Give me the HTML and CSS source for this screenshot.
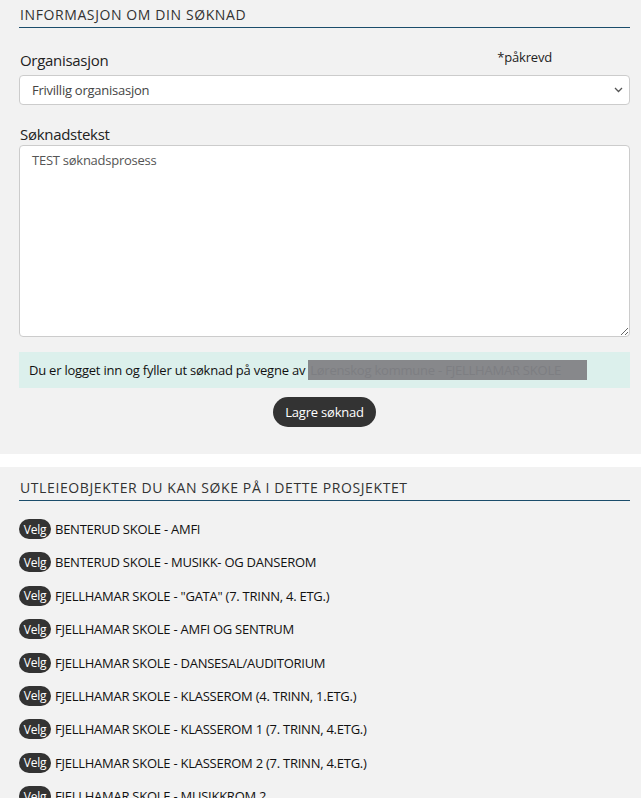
FILE: index.html
```html
<!DOCTYPE html>
<html lang="no">
<head>
<meta charset="utf-8">
<title>Søknad</title>
<link rel="stylesheet" href="styles.css">
</head>
<body>
<section class="panel panel-form">
  <h2 class="section-title">Informasjon om din søknad</h2>
  <div class="label-row">
    <label class="field-label" for="org">Organisasjon</label>
    <span class="required">*påkrevd</span>
  </div>
  <div class="select-wrap">
    <select id="org" class="select">
      <option>Frivillig organisasjon</option>
    </select>
    <svg class="chevron" width="9" height="6" viewBox="0 0 9 6"><path d="M1 1l3.5 3.5L8 1" fill="none" stroke="#555" stroke-width="1.3"/></svg>
  </div>
  <label class="field-label field-label-2" for="txt">Søknadstekst</label>
  <textarea id="txt" class="textarea">TEST søknadsprosess</textarea>
  <div class="info">Du er logget inn og fyller ut søknad på vegne av <span class="redacted">Lørenskog kommune - FJELLHAMAR SKOLE</span></div>
  <div class="actions"><button class="btn">Lagre søknad</button></div>
</section>
<section class="panel panel-list">
  <h2 class="section-title">Utleieobjekter du kan søke på i dette prosjektet</h2>
  <ul class="objects">
    <li><span class="velg">Velg</span>BENTERUD SKOLE - AMFI</li>
    <li><span class="velg">Velg</span>BENTERUD SKOLE - MUSIKK- OG DANSEROM</li>
    <li><span class="velg">Velg</span>FJELLHAMAR SKOLE - "GATA" (7. TRINN, 4. ETG.)</li>
    <li><span class="velg">Velg</span>FJELLHAMAR SKOLE - AMFI OG SENTRUM</li>
    <li><span class="velg">Velg</span>FJELLHAMAR SKOLE - DANSESAL/AUDITORIUM</li>
    <li><span class="velg">Velg</span>FJELLHAMAR SKOLE - KLASSEROM (4. TRINN, 1.ETG.)</li>
    <li><span class="velg">Velg</span>FJELLHAMAR SKOLE - KLASSEROM 1 (7. TRINN, 4.ETG.)</li>
    <li><span class="velg">Velg</span>FJELLHAMAR SKOLE - KLASSEROM 2 (7. TRINN, 4.ETG.)</li>
    <li><span class="velg">Velg</span>FJELLHAMAR SKOLE - MUSIKKROM 2</li>
  </ul>
</section>
</body>
</html>
```
FILE: styles.css
```css
* { box-sizing: border-box; }
html, body { margin: 0; padding: 0; background: #ffffff; }
body {
  font-family: "Open Sans", "Liberation Sans", sans-serif;
  color: #222;
  overflow: hidden;
  height: 798px;
}
.panel {
  background: #f2f2f2;
  padding: 0 11px 0 19px;
}
.panel-form {
  padding-top: 5px;
  padding-bottom: 27px;
}
.panel-list {
  margin-top: 13px;
  padding-top: 11px;
}
.section-title {
  margin: 0;
  font-size: 14px;
  font-weight: 400;
  line-height: 20px;
  letter-spacing: 0.6px;
  text-transform: uppercase;
  color: #333;
  padding: 0 0 2px 1px;
  border-bottom: 1px solid #1b4d6b;
}
.label-row {
  display: flex;
  justify-content: space-between;
  align-items: flex-start;
  margin-top: 22px;
  padding-right: 78px;
}
.field-label {
  display: block;
  font-size: 15px;
  line-height: 20px;
  letter-spacing: -0.3px;
  color: #222;
  padding-left: 1px;
}
.required {
  font-size: 13px;
  line-height: 18px;
  letter-spacing: -0.2px;
  color: #222;
  margin-top: -2px;
}
.select-wrap {
  position: relative;
  margin-top: 5px;
}
.select {
  display: block;
  width: 100%;
  height: 30px;
  appearance: none;
  -webkit-appearance: none;
  background: #fff;
  border: 1px solid #ccc;
  border-radius: 4px;
  font-family: inherit;
  font-size: 13px;
  letter-spacing: -0.25px;
  color: #444;
  padding: 0 24px 0 12px;
}
.chevron {
  position: absolute;
  right: 7px;
  top: 12px;
}
.field-label-2 {
  margin-top: 19px;
}
.textarea {
  display: block;
  width: 100%;
  height: 192px;
  margin-top: 1px;
  background: #fff;
  border: 1px solid #ccc;
  border-radius: 4px;
  font-family: inherit;
  font-size: 13px;
  letter-spacing: -0.25px;
  line-height: 18px;
  color: #555;
  padding: 5px 12px;
  resize: vertical;
}
.info {
  margin-top: 15px;
  background: #dcf0ec;
  height: 36px;
  display: flex;
  align-items: center;
  padding: 0 10px;
  font-size: 13px;
  letter-spacing: -0.22px;
  color: #111;
  white-space: nowrap;
}
.redacted {
  display: inline-block;
  margin-left: 3px;
  width: 279px;
  height: 20px;
  line-height: 20px;
  background: #87888b;
  color: #7d7e82;
  padding-left: 2px;
  overflow: hidden;
}
.actions {
  display: flex;
  justify-content: center;
  margin-top: 9px;
}
.btn {
  height: 30px;
  padding: 0 12px;
  border: 0;
  border-radius: 15px;
  background: #333;
  color: #fff;
  font-family: inherit;
  font-size: 13px;
  letter-spacing: -0.2px;
}
.objects {
  list-style: none;
  margin: 0;
  padding: 18px 0 0 0;
}
.objects li {
  display: flex;
  align-items: center;
  height: 20px;
  margin-bottom: 13.4px;
  font-size: 13px;
  letter-spacing: -0.25px;
  color: #111;
  white-space: nowrap;
}
.velg {
  display: inline-flex;
  align-items: center;
  justify-content: center;
  width: 32px;
  height: 20px;
  border-radius: 10px;
  background: #333;
  color: #fff;
  font-size: 12px;
  letter-spacing: -0.2px;
  margin-right: 4px;
}
```
